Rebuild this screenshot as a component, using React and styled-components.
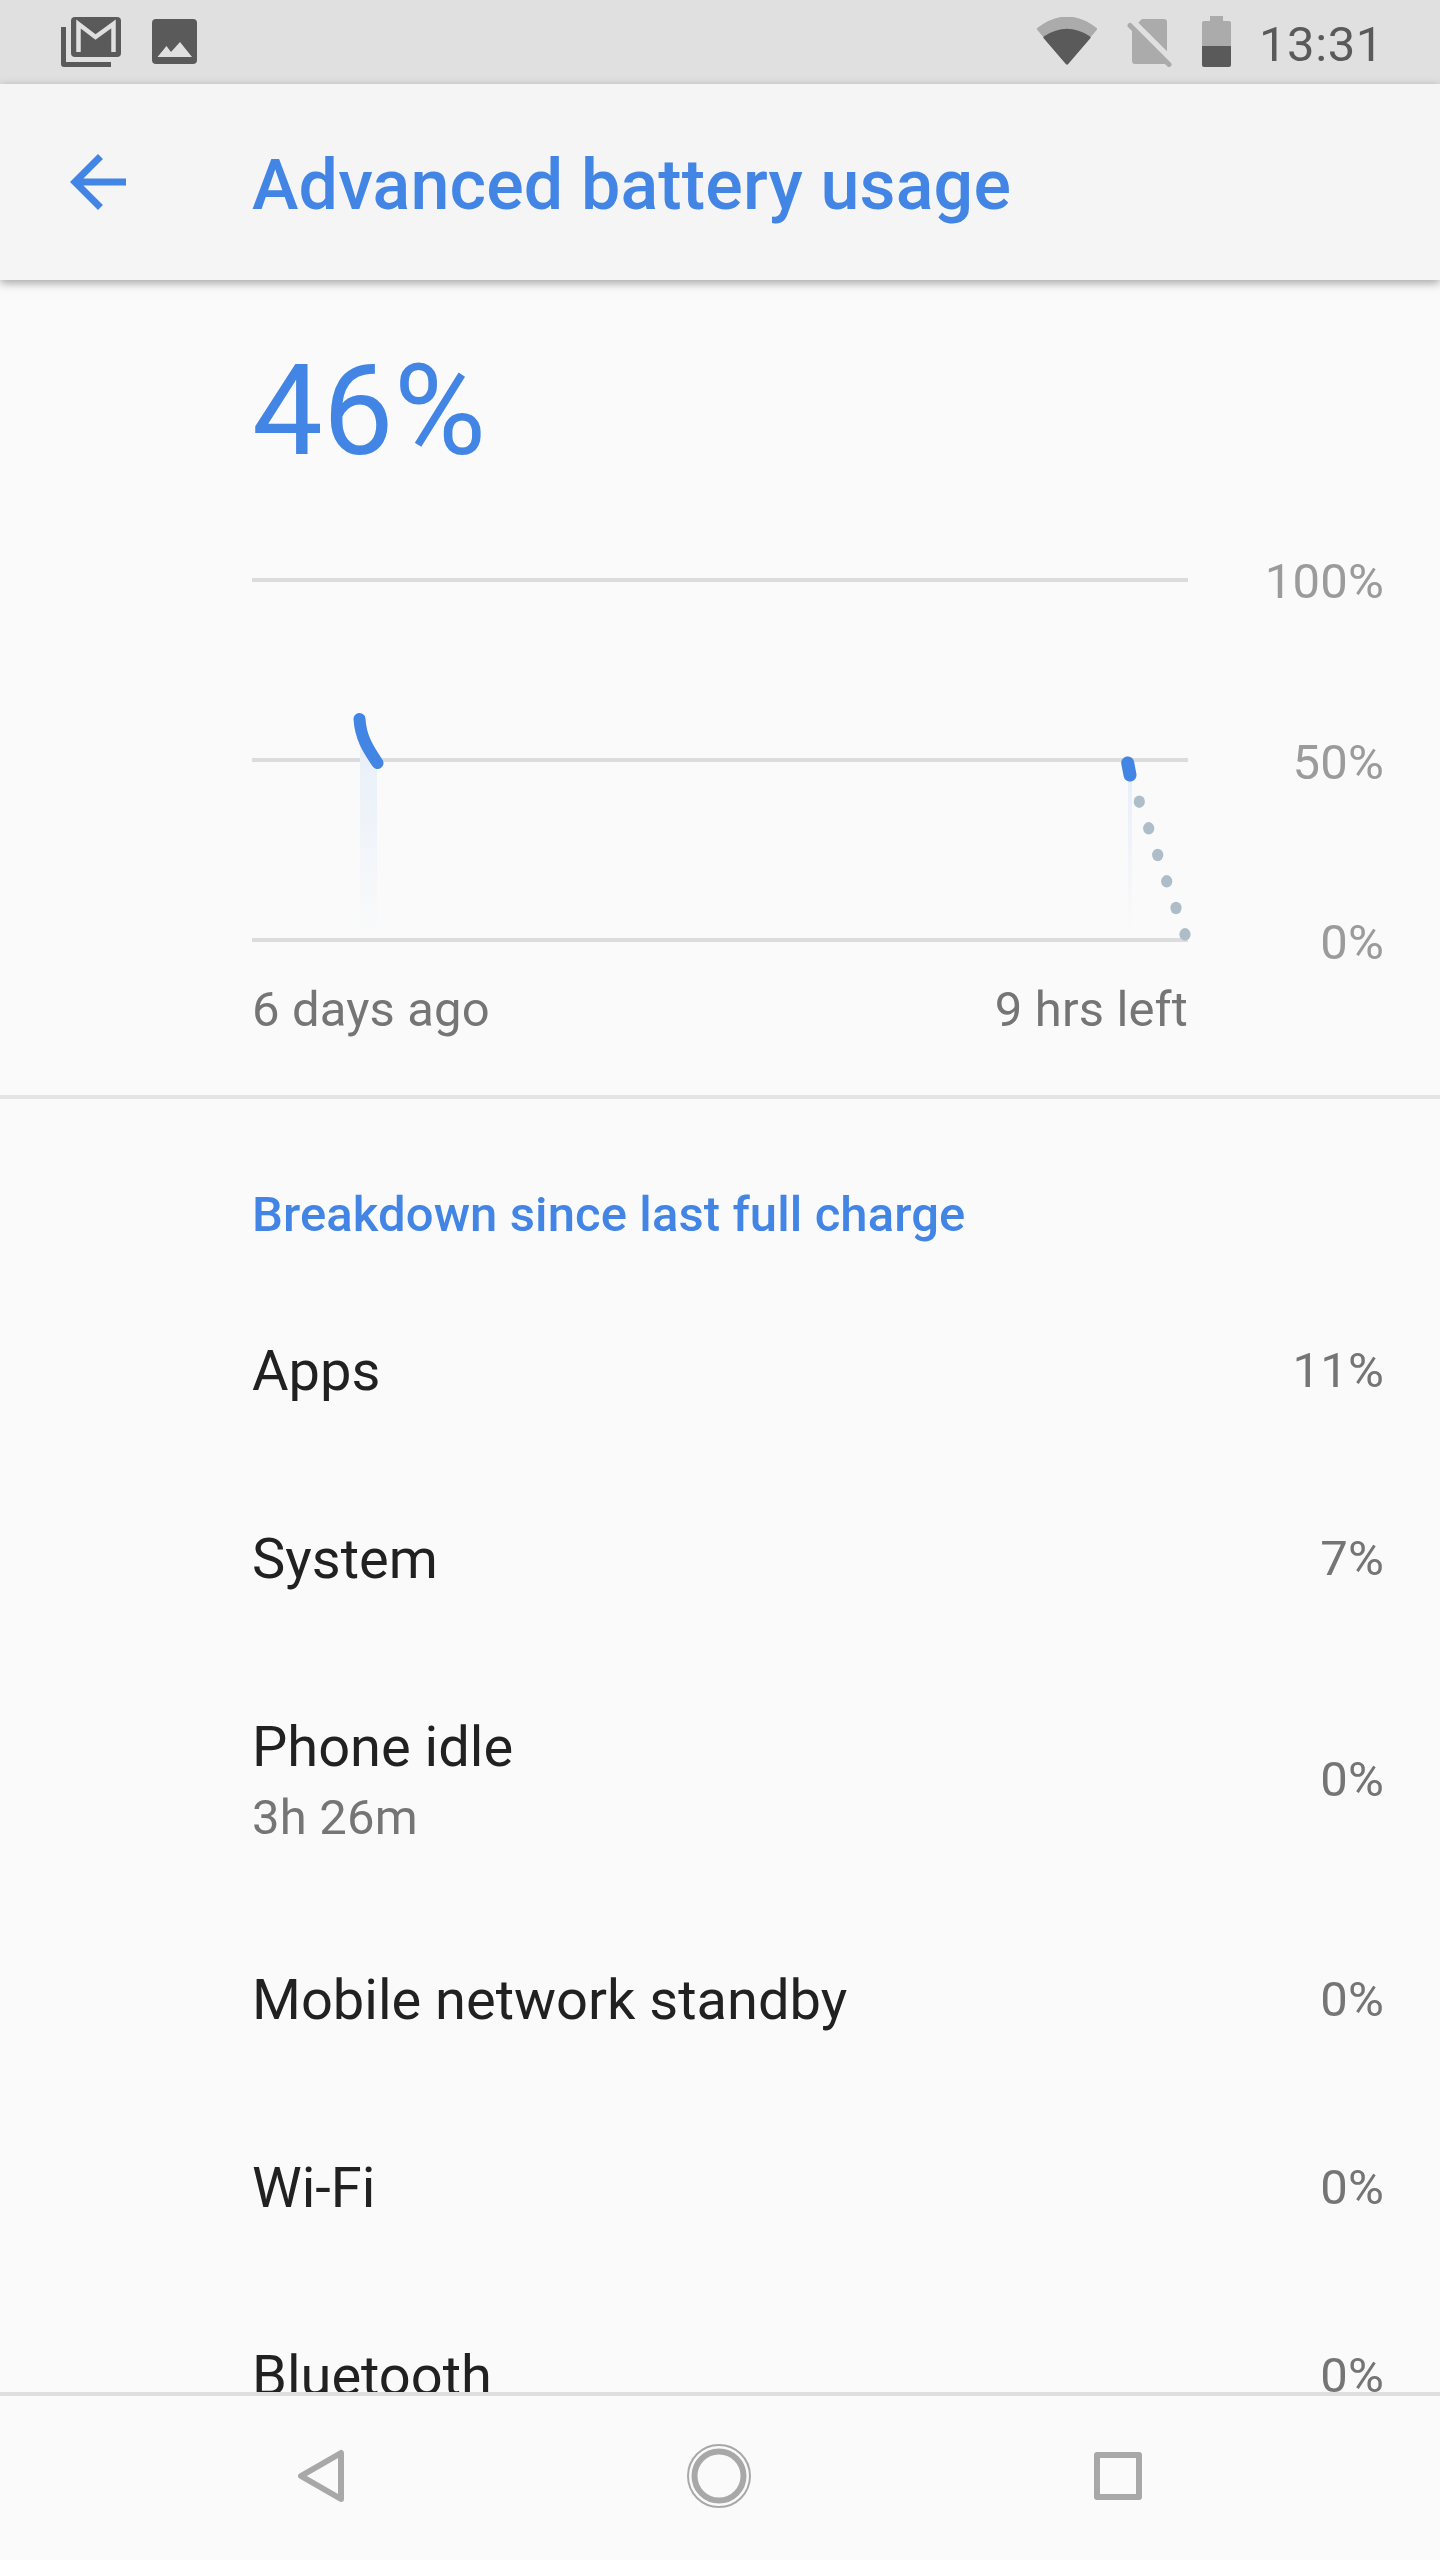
import styled, { createGlobalStyle } from "styled-components";

const GlobalStyle = createGlobalStyle`
  html, body {
    margin: 0;
    padding: 0;
    background: #fafafa;
  }
`;

const BLUE = "#4285e4";
const ICON_DARK = "#5a5a5a";
const ICON_FADED = "#ababab";
const BAR_GREY = "#e0e0e0";

const Screen = styled.div`
  width: 1440px;
  height: 2560px;
  display: flex;
  flex-direction: column;
  overflow: hidden;
  background: #fafafa;
  font-family: Roboto, "Liberation Sans", sans-serif;
`;

const StatusBar = styled.div`
  flex: none;
  height: 84px;
  display: flex;
  align-items: flex-start;
  justify-content: space-between;
  padding: 0 56px 0 61px;
  background: ${BAR_GREY};
  box-sizing: border-box;
`;

const StatusGroup = styled.div`
  display: flex;
  align-items: flex-start;
  gap: ${(p) => p.$gap}px;
  padding-top: 16px;
`;

const StatusIcon = styled.svg`
  display: block;
  flex: none;
  margin-top: ${(p) => p.$top || 0}px;
`;

const Clock = styled.span`
  font-size: 49px;
  line-height: 58px;
  letter-spacing: 0.6px;
  color: ${ICON_DARK};
  margin-left: -2px;
`;

const AppBar = styled.header`
  position: relative;
  z-index: 2;
  flex: none;
  height: 196px;
  display: flex;
  align-items: center;
  background: #f5f5f5;
  box-shadow: 0 3px 9px rgba(0, 0, 0, 0.35);
`;

const BackButton = styled.svg`
  display: block;
  flex: none;
  width: 84px;
  height: 84px;
  margin: 0 112px 0 56px;
  fill: ${BLUE};
`;

const AppTitle = styled.h1`
  margin: 6px 0 0;
  font-size: 70px;
  line-height: 84px;
  font-weight: 500;
  letter-spacing: 0.15px;
  color: ${BLUE};
`;

const Content = styled.main`
  flex: 1;
  min-height: 0;
  overflow: hidden;
`;

const Summary = styled.section`
  padding: 51px 56px 55px 252px;
  border-bottom: 4px solid #e4e4e4;
`;

const BigPercent = styled.div`
  font-size: 126px;
  line-height: 160px;
  color: ${BLUE};
  margin-bottom: 60px;
`;

const ChartRow = styled.div`
  display: flex;
`;

const ChartSvg = styled.svg`
  display: block;
  flex: none;
  width: 936px;
  height: 421px;
  overflow: visible;
`;

const YAxis = styled.div`
  flex: 1;
  display: flex;
  flex-direction: column;
  justify-content: space-between;
  align-items: flex-end;
  margin: 1px 0 -1px;
`;

const YLabel = styled.span`
  font-size: 49px;
  line-height: 60px;
  letter-spacing: 0.2px;
  color: #9b9b9b;
`;

const XAxis = styled.div`
  width: 936px;
  display: flex;
  justify-content: space-between;
  margin-top: 8px;
  font-size: 49px;
  line-height: 60px;
  letter-spacing: 0.15px;
  color: #757575;
`;

const SectionTitle = styled.h2`
  margin: 0;
  padding: 86px 56px 32px 252px;
  font-size: 49px;
  line-height: 60px;
  font-weight: 500;
  letter-spacing: 0.1px;
  color: ${BLUE};
`;

const Row = styled.div`
  display: flex;
  align-items: center;
  justify-content: space-between;
  padding: 60px 56px 60px 252px;
`;

const RowLabel = styled.div`
  font-size: 56px;
  line-height: 68px;
  color: #212121;
`;

const RowSub = styled.div`
  font-size: 49px;
  line-height: 65px;
  letter-spacing: 0.2px;
  margin: 4px 0 -4px;
  color: #757575;
`;

const RowValue = styled.div`
  font-size: 49px;
  line-height: 60px;
  letter-spacing: 0.2px;
  color: #757575;
`;

const NavBar = styled.nav`
  flex: none;
  height: 168px;
  box-sizing: border-box;
  display: flex;
  align-items: center;
  border-top: 4px solid #dedede;
  background: #fafafa;
  padding: 0 0 4px 298px;
`;

const NavIcon = styled.svg`
  display: block;
  flex: none;
  margin-left: ${(p) => p.$left || 0}px;
  fill: none;
  stroke: #a8a8a8;
`;

const rows = [
  { label: "Apps", value: "11%" },
  { label: "System", value: "7%" },
  { label: "Phone idle", sub: "3h 26m", value: "0%" },
  { label: "Mobile network standby", value: "0%" },
  { label: "Wi-Fi", value: "0%" },
  { label: "Bluetooth", value: "0%" },
];

const forecastDots = [
  [887.3, 250.7],
  [896.7, 277.3],
  [905.7, 304],
  [914.7, 330.3],
  [924, 357],
  [933, 383.3],
];

const GmailIcon = () => (
  <StatusIcon width="60" height="50" viewBox="0 0 60 50" $top={1}>
    <rect x="10" y="0" width="50" height="40" rx="4" fill={ICON_DARK} />
    <path d="M0 10h5v35h45v5H3a3 3 0 0 1-3-3z" fill={ICON_DARK} />
    <path
      d="M17.5 35V7L34.5 20 52.5 7V35"
      fill="none"
      stroke={BAR_GREY}
      strokeWidth="4.5"
    />
  </StatusIcon>
);

const PictureIcon = () => (
  <StatusIcon width="45" height="45" viewBox="0 0 45 45" $top={3}>
    <rect width="45" height="45" rx="4" fill={ICON_DARK} />
    <path d="M5.5 38L14.5 27 19 33 28 23 40 38z" fill={BAR_GREY} />
  </StatusIcon>
);

const WifiIcon = () => (
  <StatusIcon width="60" height="48" viewBox="0 0 60 48" $top={1}>
    <path
      d="M30 46L1.5 12Q30 -10 58.5 12z"
      fill={ICON_FADED}
      stroke={ICON_FADED}
      strokeWidth="3"
      strokeLinejoin="round"
    />
    <path
      d="M30 46L8 20.5Q30 6 52 20.5z"
      fill={ICON_DARK}
      stroke={ICON_DARK}
      strokeWidth="3"
      strokeLinejoin="round"
    />
  </StatusIcon>
);

const NoSimIcon = () => (
  <StatusIcon width="45" height="48" viewBox="0 0 45 48" $top={3}>
    <path
      d="M15 0H37a3 3 0 0 1 3 3V42a3 3 0 0 1-3 3H8a3 3 0 0 1-3-3V10z"
      fill={ICON_FADED}
    />
    <path d="M6.5 3L45.5 42" stroke={BAR_GREY} strokeWidth="6" />
    <path
      d="M3 6.5L42 45.5"
      stroke={ICON_FADED}
      strokeWidth="5"
      strokeLinecap="round"
    />
  </StatusIcon>
);

const BatteryIcon = () => (
  <StatusIcon width="29" height="51" viewBox="0 0 29 51">
    <path d="M8 0H21V5H27a2 2 0 0 1 2 2V30H0V7a2 2 0 0 1 2-2H8z" fill={ICON_FADED} />
    <path d="M0 30H29V49a2 2 0 0 1-2 2H2a2 2 0 0 1-2-2z" fill={ICON_DARK} />
  </StatusIcon>
);

const BatteryChart = () => (
  <ChartSvg viewBox="0 0 936 421">
    <defs>
      <linearGradient id="usageFill" x1="0" y1="0" x2="0" y2="1">
        <stop offset="0" stopColor="#e8eff9" />
        <stop offset="1" stopColor="#fafafa" />
      </linearGradient>
    </defs>
    {[29, 209, 389].map((y) => (
      <line key={y} x1="0" x2="936" y1={y} y2={y} stroke="#dcdcdc" strokeWidth="4" />
    ))}
    <path d="M108 190C110 200 118 206 125 212V385H108z" fill="url(#usageFill)" />
    <path d="M876 224H880V385H876z" fill="url(#usageFill)" />
    <path
      d="M107.5 168C108.5 186 116 198 125.5 212"
      fill="none"
      stroke={BLUE}
      strokeWidth="12"
      strokeLinecap="round"
    />
    <path
      d="M875.7 212L878 224"
      fill="none"
      stroke={BLUE}
      strokeWidth="13"
      strokeLinecap="round"
    />
    {forecastDots.map(([cx, cy]) => (
      <ellipse key={cx} cx={cx} cy={cy} rx="5.6" ry="6.2" fill="#adbec9" />
    ))}
  </ChartSvg>
);

export default function App() {
  return (
    <Screen>
      <GlobalStyle />
      <StatusBar>
        <StatusGroup $gap={31}>
          <GmailIcon />
          <PictureIcon />
        </StatusGroup>
        <StatusGroup $gap={30}>
          <WifiIcon />
          <NoSimIcon />
          <BatteryIcon />
          <Clock>13:31</Clock>
        </StatusGroup>
      </StatusBar>
      <AppBar>
        <BackButton viewBox="0 0 24 24">
          <path d="M20 11H7.83l5.59-5.59L12 4l-8 8 8 8 1.41-1.41L7.83 13H20v-2z" />
        </BackButton>
        <AppTitle>Advanced battery usage</AppTitle>
      </AppBar>
      <Content>
        <Summary>
          <BigPercent>46%</BigPercent>
          <ChartRow>
            <BatteryChart />
            <YAxis>
              <YLabel>100%</YLabel>
              <YLabel>50%</YLabel>
              <YLabel>0%</YLabel>
            </YAxis>
          </ChartRow>
          <XAxis>
            <span>6 days ago</span>
            <span>9 hrs left</span>
          </XAxis>
        </Summary>
        <SectionTitle>Breakdown since last full charge</SectionTitle>
        {rows.map((row) => (
          <Row key={row.label}>
            <div>
              <RowLabel>{row.label}</RowLabel>
              {row.sub && <RowSub>{row.sub}</RowSub>}
            </div>
            <RowValue>{row.value}</RowValue>
          </Row>
        ))}
      </Content>
      <NavBar>
        <NavIcon width="46" height="54" viewBox="0 0 46 54" strokeWidth="6" strokeLinejoin="round">
          <path d="M43 4V50L3 27z" />
        </NavIcon>
        <NavIcon width="64" height="64" viewBox="0 0 64 64" $left={343}>
          <circle cx="32" cy="32" r="31" strokeWidth="2" />
          <circle cx="32" cy="32" r="24.5" strokeWidth="6" />
        </NavIcon>
        <NavIcon width="48" height="48" viewBox="0 0 48 48" $left={343} strokeWidth="6" strokeLinejoin="round">
          <rect x="3" y="3" width="42" height="42" />
        </NavIcon>
      </NavBar>
    </Screen>
  );
}
